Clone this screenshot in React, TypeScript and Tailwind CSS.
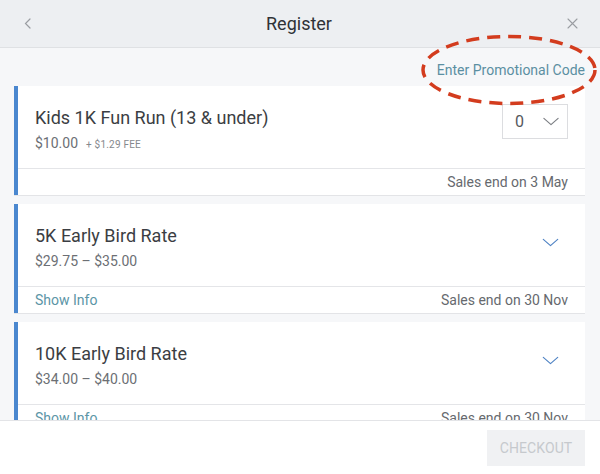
import React from 'react';

type Ticket = {
  name: string;
  price: string;
  fee?: string;
  salesEnd: string;
  showInfo?: boolean;
  picker?: boolean;
};

const tickets: Ticket[] = [
  { name: 'Kids 1K Fun Run (13 & under)', price: '$10.00', fee: '+ $1.29 FEE', salesEnd: 'Sales end on 3 May', picker: true },
  { name: '5K Early Bird Rate', price: '$29.75 – $35.00', salesEnd: 'Sales end on 30 Nov', showInfo: true },
  { name: '10K Early Bird Rate', price: '$34.00 – $40.00', salesEnd: 'Sales end on 30 Nov', showInfo: true },
];

function Chevron({ className }: { className: string }) {
  return (
    <svg className={className} viewBox="0 0 18 10" fill="none" stroke="currentColor" strokeWidth="1.3" strokeLinecap="round" strokeLinejoin="round">
      <path d="M1 1.5 L9 8.5 L17 1.5" />
    </svg>
  );
}

function TicketCard({ ticket }: { ticket: Ticket }) {
  return (
    <div className="flex flex-col border-l-4 border-[#4a87cf] bg-white shadow-[0_1px_0_#e3e4e7]">
      <div className="flex h-[82px] items-start justify-between pl-[17px] pr-[17px] pt-[20px]">
        <div className="flex flex-col">
          <div className="text-[18px] leading-[24px] text-[#3b3e43]">{ticket.name}</div>
          <div className="mt-[3px] flex items-baseline gap-[8px] text-[14px] leading-[20px] text-[#6c6f74]">
            <span>{ticket.price}</span>
            {ticket.fee && <span className="text-[10px] tracking-[0.2px] text-[#85888d]">{ticket.fee}</span>}
          </div>
        </div>
        {ticket.picker ? (
          <div className="-mt-[2px] flex h-[35px] w-[66px] items-center justify-between border border-[#dcdde0] pl-[12px] pr-[8px] text-[16px] text-[#55585d]">
            <span>0</span>
            <Chevron className="h-[9px] w-[16px] text-[#7b7e83]" />
          </div>
        ) : (
          <Chevron className="mr-[9px] mt-[14px] h-[9px] w-[17px] text-[#4f83c4]" />
        )}
      </div>
      <div className="flex h-[27px] items-center justify-between border-t border-[#e4e5e8] pl-[17px] pr-[17px] text-[14px]">
        <span className="text-[#5b95a6]">{ticket.showInfo ? 'Show Info' : ''}</span>
        <span className="text-[#66696e]">{ticket.salesEnd}</span>
      </div>
    </div>
  );
}

export default function App() {
  return (
    <div className="relative flex h-[474px] w-[600px] flex-col overflow-hidden bg-[#f6f7f9] font-['Roboto','Liberation_Sans',sans-serif]">
      {/* Header */}
      <div className="flex h-[48px] shrink-0 items-center justify-between border-b border-[#dfe1e4] bg-[#edeff2] pl-[24px] pr-[22px]">
        <svg className="h-[11px] w-[7px] text-[#9a9da2]" viewBox="0 0 7 11" fill="none" stroke="currentColor" strokeWidth="1.2" strokeLinecap="round">
          <path d="M6 1 L1.5 5.5 L6 10" />
        </svg>
        <div className="text-[18px] text-[#2f3237]">Register</div>
        <svg className="h-[11px] w-[11px] text-[#9a9da2]" viewBox="0 0 11 11" fill="none" stroke="currentColor" strokeWidth="1.1" strokeLinecap="round">
          <path d="M1 1 L10 10 M10 1 L1 10" />
        </svg>
      </div>

      {/* Body */}
      <div className="flex flex-1 flex-col overflow-hidden pl-[14px] pr-[15px]">
        <div className="flex h-[38px] shrink-0 items-center justify-end pt-[6px] text-[14px] text-[#5b8fa2]">
          Enter Promotional Code
        </div>
        <div className="flex flex-col gap-[9px]">
          {tickets.map((t) => (
            <TicketCard key={t.name} ticket={t} />
          ))}
        </div>
      </div>

      {/* Footer */}
      <div className="flex h-[54px] shrink-0 items-start justify-end border-t border-[#e3e4e7] bg-white pr-[15px] pt-[9px]">
        <div className="flex h-[36px] w-[98px] items-center justify-center bg-[#f0f1f3] text-[14px] tracking-[0.1px] text-[#c6c9cd]">
          CHECKOUT
        </div>
      </div>

      {/* annotation */}
      <svg className="pointer-events-none absolute left-[420px] top-[34px] h-[72px] w-[178px]" viewBox="0 0 178 72" fill="none">
        <ellipse cx="89" cy="36" rx="86" ry="33.5" stroke="#d33c1e" strokeWidth="3.5" strokeDasharray="13 8" />
      </svg>
    </div>
  );
}
